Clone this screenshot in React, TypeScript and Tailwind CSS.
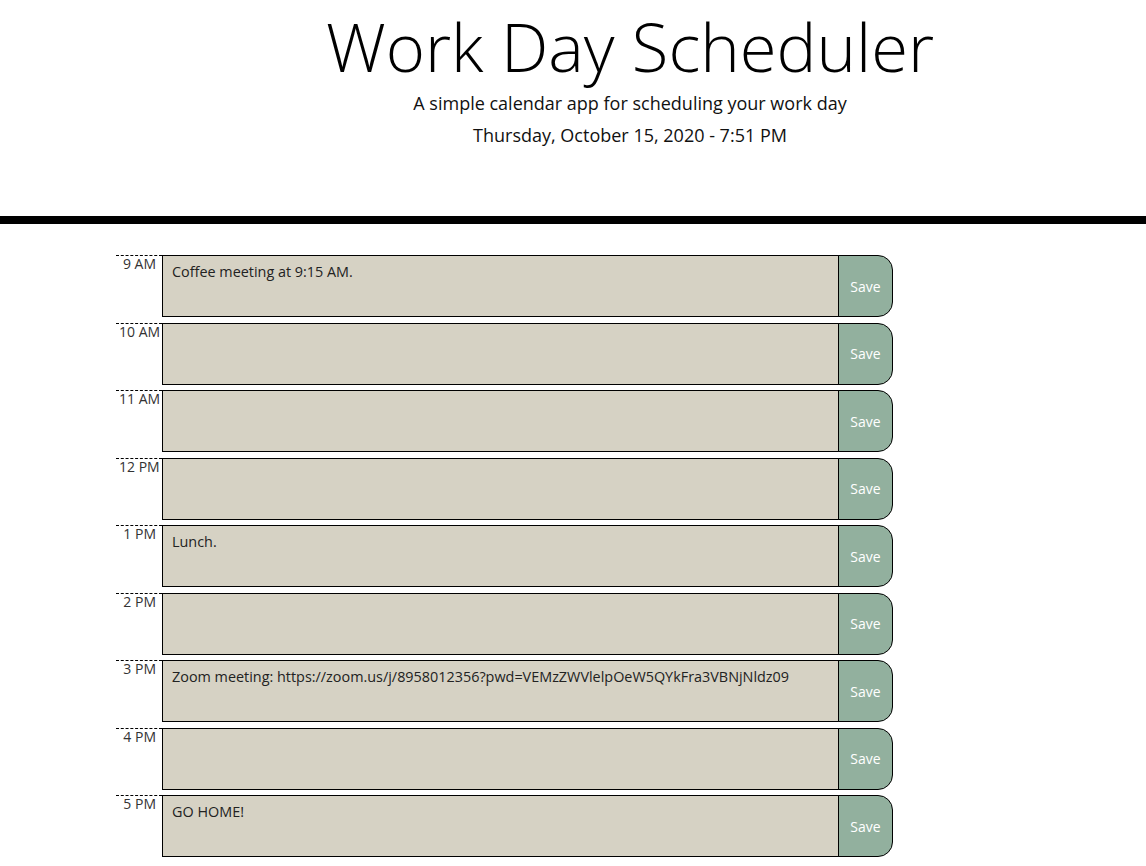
const hours = [
  { label: "9 AM", text: "Coffee meeting at 9:15 AM." },
  { label: "10 AM", text: "" },
  { label: "11 AM", text: "" },
  { label: "12 PM", text: "" },
  { label: "1 PM", text: "Lunch." },
  { label: "2 PM", text: "" },
  { label: "3 PM", text: "Zoom meeting: https://zoom.us/j/8958012356?pwd=VEMzZWVlelpOeW5QYkFra3VBNjNldz09" },
  { label: "4 PM", text: "" },
  { label: "5 PM", text: "GO HOME!" },
];

const App = () => {
  return (
    <div className="min-h-[866px] bg-white font-['Open_Sans',sans-serif] text-black">
      {/* Header */}
      <header className="h-[216px] pl-[114px] pt-[6px] text-center">
        <h1 className="text-[67px] font-light leading-[80px]">Work Day Scheduler</h1>
        <p className="mt-[5px] text-[18px] leading-[24px] text-[#111]">
          A simple calendar app for scheduling your work day
        </p>
        <p className="mt-[8px] text-[18px] leading-[24px] text-[#111]">
          Thursday, October 15, 2020 - 7:51 PM
        </p>
      </header>
      <div className="h-[8px] w-full bg-black"></div>

      {/* Time blocks */}
      <div className="ml-[116px] mt-[31px] flex flex-col gap-[5.5px]">
        {hours.map((h) => (
          <div key={h.label} className="flex h-[62px] w-[777px]">
            <div className="w-[46px] shrink-0 border-t border-dashed border-black pl-[3px] pr-[6px] text-right text-[14px] leading-[16px] text-[#333] whitespace-nowrap">
              {h.label}
            </div>
            <div className="flex-1 border border-black bg-[#d6d2c4] px-[9px] py-[6px] text-[14.4px] leading-[20px] text-[#222]">
              {h.text}
            </div>
            <button className="ml-[-1px] flex w-[55px] shrink-0 items-center justify-center rounded-r-[15px] border border-black bg-[#92b09e] text-[14px] text-white">
              Save
            </button>
          </div>
        ))}
      </div>
    </div>
  );
};

export default App;
